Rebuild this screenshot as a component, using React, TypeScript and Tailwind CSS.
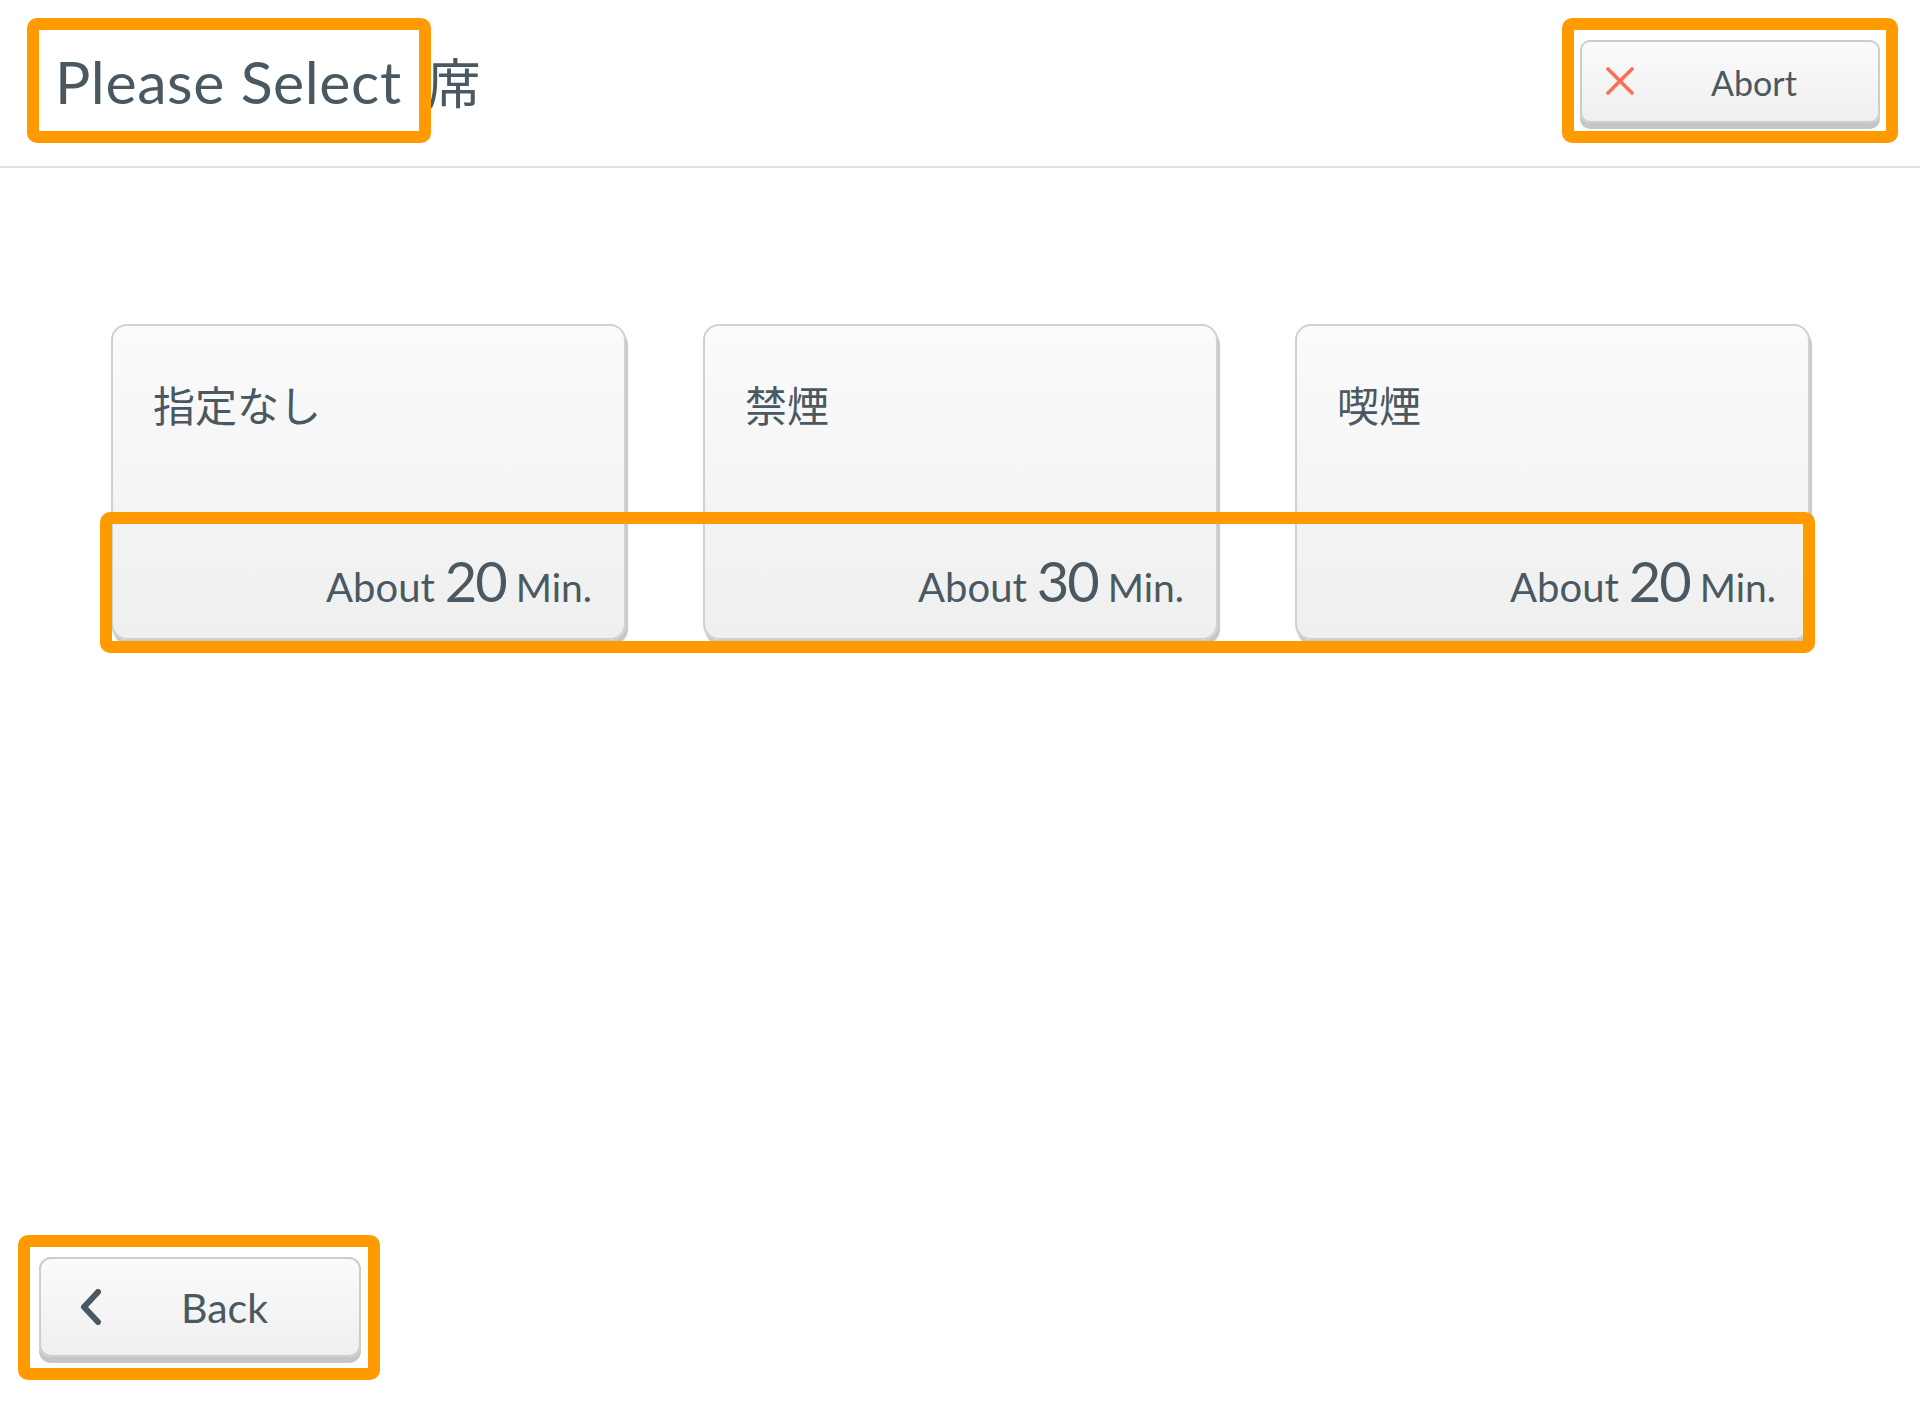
import React from "react";

const FONT = { fontFamily: '"Lato", "Noto Sans CJK JP", sans-serif' };

function XIcon() {
  return (
    <svg width="28" height="28" viewBox="0 0 28 28" fill="none">
      <path d="M2 2 L26 26 M26 2 L2 26" stroke="#fd6f52" strokeWidth="3.6" strokeLinecap="round" />
    </svg>
  );
}

function Chevron() {
  return (
    <svg width="24" height="36" viewBox="0 0 24 36" fill="none">
      <path d="M19 3 L5 18 L19 33" stroke="#4a5961" strokeWidth="6" strokeLinecap="round" strokeLinejoin="round" />
    </svg>
  );
}

function Card({ title, mins }: { title: string; mins: string }) {
  return (
    <div className="h-[316px] rounded-[16px] border-2 border-[#d0d0d0] bg-gradient-to-b from-[#fbfbfb] to-[#efefef] shadow-[2px_5px_1px_#c6c6c6] flex flex-col justify-between pl-[40px] pr-[32px] pt-[59px] pb-[29px]">
      <div className="text-[42px] leading-none text-[#4a5961]">{title}</div>
      <div className="flex items-baseline justify-end text-[#4a5961] leading-none">
        <span className="text-[40px]">About</span>
        <span className="text-[56px] ml-[10px] mr-[10px] tracking-[-2px]">{mins}</span>
        <span className="text-[39px]">Min.</span>
      </div>
    </div>
  );
}

export default function App() {
  return (
    <div className="relative min-h-[1408px] w-[1920px] bg-white flex flex-col text-[#4a5961]" style={FONT}>
      <header className="h-[168px] border-b-2 border-[#e2e2e2] flex items-center justify-between pl-[55px] pr-[40px]">
        <h1 className="text-[59px] font-normal leading-none mt-[-3px] tracking-[0.6px]">
          Please Select<span className="ml-[25px] text-[54px] tracking-normal">席</span>
        </h1>
        <button className="w-[300px] h-[83px] mt-[-4px] rounded-[10px] border-2 border-[#cdcdcd] bg-gradient-to-b from-[#fbfbfb] to-[#efefef] shadow-[0_6px_0_#c6c6c6] flex items-center pl-[24px]">
          <XIcon />
          <span className="flex-1 text-center text-[34px] leading-none pr-[4px] mt-[4px]">Abort</span>
        </button>
      </header>

      <main className="grid grid-cols-3 gap-[77px] pl-[111px] pr-[110px] pt-[156px]">
        <Card title="指定なし" mins="20" />
        <Card title="禁煙" mins="30" />
        <Card title="喫煙" mins="20" />
      </main>

      <div className="flex-1" />

      <footer className="pl-[39px] pb-[51px]">
        <button className="w-[322px] h-[100px] rounded-[12px] border-2 border-[#cdcdcd] bg-gradient-to-b from-[#fbfbfb] to-[#efefef] shadow-[0_6px_0_#c6c6c6] flex items-center pl-[38px]">
          <Chevron />
          <span className="ml-[78px] text-[41px] leading-none">Back</span>
        </button>
      </footer>

      {/* annotation overlays */}
      <div className="pointer-events-none absolute left-[27px] top-[18px] w-[404px] h-[125px] rounded-[10px] border-[12px] border-[#ff9a00]" />
      <div className="pointer-events-none absolute left-[1562px] top-[18px] w-[336px] h-[125px] rounded-[10px] border-[12px] border-[#ff9a00]" />
      <div className="pointer-events-none absolute left-[100px] top-[512px] w-[1715px] h-[141px] rounded-[10px] border-[12px] border-[#ff9a00]" />
      <div className="pointer-events-none absolute left-[18px] top-[1235px] w-[362px] h-[145px] rounded-[10px] border-[12px] border-[#ff9a00]" />
    </div>
  );
}
